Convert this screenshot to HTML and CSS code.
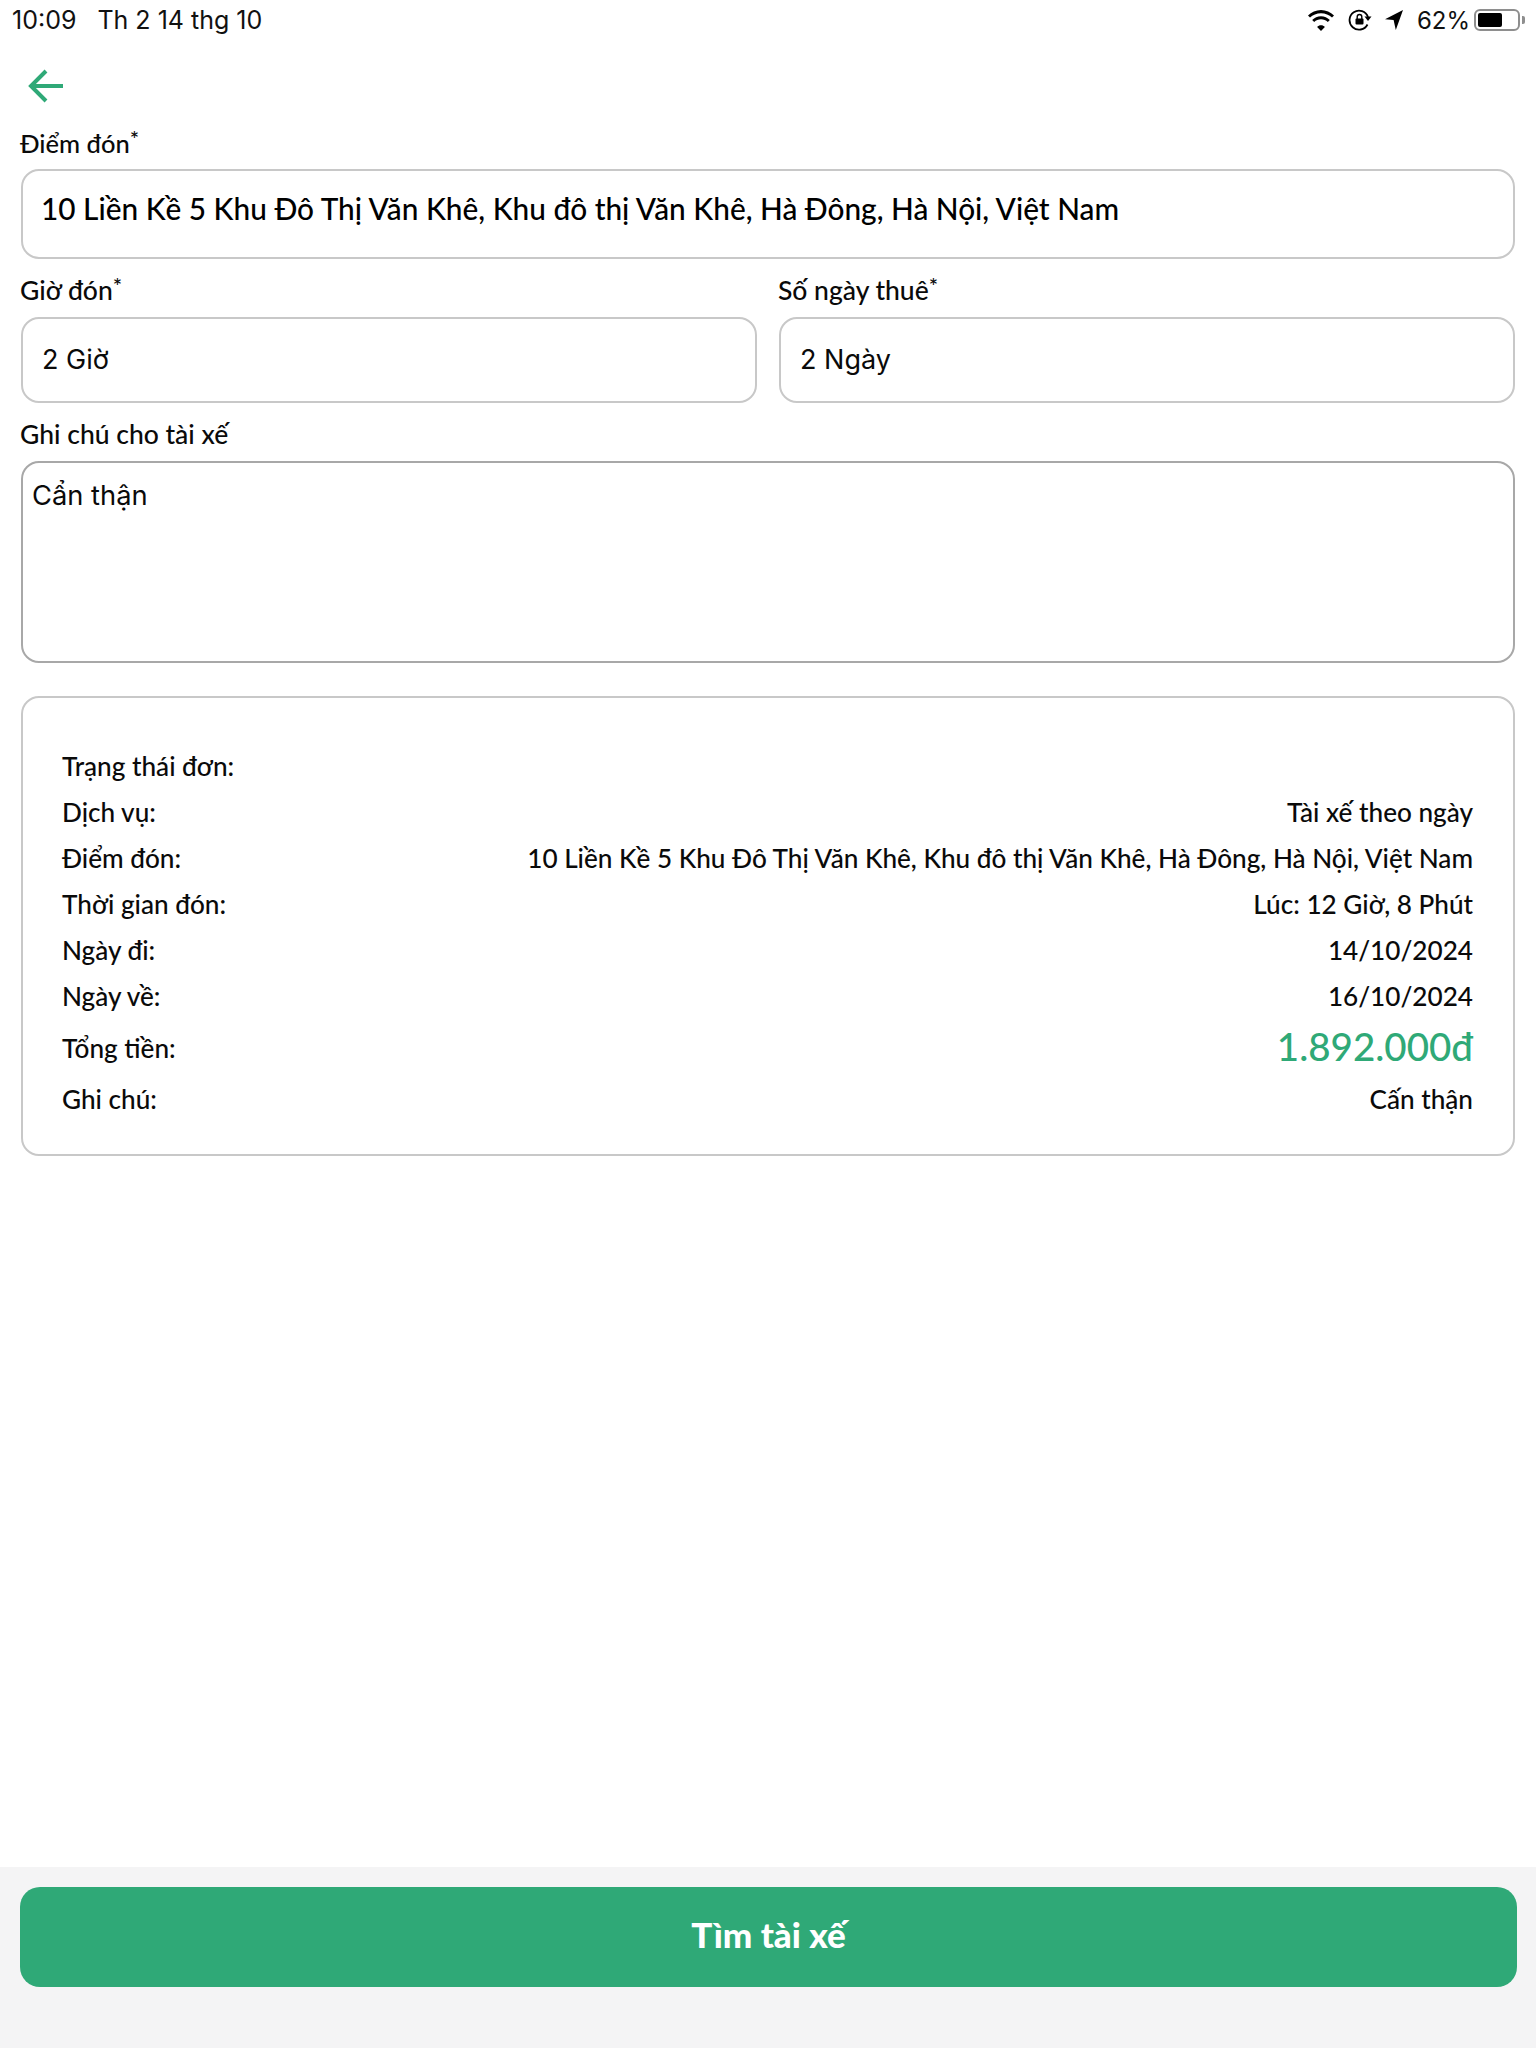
FILE: index.html
```html
<!DOCTYPE html>
<html lang="vi">
<head>
<meta charset="utf-8">
<title>Tìm tài xế</title>
<link rel="stylesheet" href="styles.css">
</head>
<body>
<div class="page">
  <header class="status">
    <div class="status-left"><span>10:09</span><span>Th 2 14 thg 10</span></div>
    <div class="status-right">
      <svg class="i-wifi" width="28" height="21" viewBox="0 0 28 21"><path d="M14 3.2c4.300 0 8.200 1.700 11 4.400l2-2.100C23.600 2.100 19 0 14 0S4.400 2.100 1 5.500l2 2.100C5.800 4.900 9.700 3.200 14 3.200zM14 9.300c2.600 0 5 1 6.800 2.700l2-2.100C20.500 7.600 17.400 6.200 14 6.200S7.500 7.600 5.200 9.900l2 2.100C9 10.300 11.400 9.300 14 9.300zM14 15.300c-1.500 0-2.900.6-3.900 1.600L14 21l3.900-4.100c-1-1-2.400-1.600-3.900-1.600z" fill="#000"/></svg>
      <svg class="i-lock" width="24" height="22" viewBox="0 0 24 22"><path d="M19.500 15.500A9.500 9.500 0 1 1 20 8" fill="none" stroke="#000" stroke-width="1.800"/><path d="M23.500 7.500h-7l3.500 4.500z" fill="#000"/><rect x="7.500" y="9.500" width="8" height="6" rx="1" fill="#000"/><path d="M9.200 10V7.800a2.300 2.300 0 0 1 4.600 0V10" fill="none" stroke="#000" stroke-width="1.400"/></svg>
      <svg class="i-loc" width="18" height="20" viewBox="0 0 18 20"><path d="M18 0L0 9.300l8.600.6L10.800 20z" fill="#000"/></svg>
      <span class="pct">62%</span>
      <div class="battery"><div class="battery-body"><div class="battery-fill"></div></div><div class="battery-nub"></div></div>
    </div>
  </header>

  <div class="back">
    <svg width="36" height="36" viewBox="0 0 36 36"><path d="M35 18H4M18 3L3 18l15 15" fill="none" stroke="#2fa977" stroke-width="4"/></svg>
  </div>

  <main class="form">
    <div class="label first">Điểm đón<sup>*</sup></div>
    <div class="input address">10 Liền Kề 5 Khu Đô Thị Văn Khê, Khu đô thị Văn Khê, Hà Đông, Hà Nội, Việt Nam</div>

    <div class="two">
      <div>
        <div class="label">Giờ đón<sup>*</sup></div>
        <div class="input small">2 Giờ</div>
      </div>
      <div>
        <div class="label">Số ngày thuê<sup>*</sup></div>
        <div class="input small">2 Ngày</div>
      </div>
    </div>

    <div class="label note-label">Ghi chú cho tài xế</div>
    <div class="textarea">Cẩn thận</div>

    <section class="card">
      <div class="row"><span>Trạng thái đơn:</span><span></span></div>
      <div class="row"><span>Dịch vụ:</span><span>Tài xế theo ngày</span></div>
      <div class="row"><span>Điểm đón:</span><span>10 Liền Kề 5 Khu Đô Thị Văn Khê, Khu đô thị Văn Khê, Hà Đông, Hà Nội, Việt Nam</span></div>
      <div class="row"><span>Thời gian đón:</span><span>Lúc: 12 Giờ, 8 Phút</span></div>
      <div class="row"><span>Ngày đi:</span><span>14/10/2024</span></div>
      <div class="row"><span>Ngày về:</span><span>16/10/2024</span></div>
      <div class="row total"><span>Tổng tiền:</span><span class="amount">1.892.000đ</span></div>
      <div class="row"><span>Ghi chú:</span><span>Cấn thận</span></div>
    </section>
  </main>

  <footer class="footer">
    <button class="cta">Tìm tài xế</button>
  </footer>
</div>
</body>
</html>
```
FILE: styles.css
```css
* { box-sizing: border-box; }
html, body { margin: 0; padding: 0; background: #fff; }
body { font-family: "Lato", "Noto Sans", sans-serif; color: #0a0a0a; }
.page { width: 1536px; height: 2048px; display: flex; flex-direction: column; }

.status { height: 40px; padding: 0 11px 0 12px; display: flex; justify-content: space-between; align-items: center; font-family: "Inter", sans-serif; font-size: 24px; color: #111; }
.status-left { display: flex; gap: 21px; font-size: 25px; }
.status-right { display: flex; align-items: center; }
.i-wifi { margin-right: 13px; }
.i-lock { margin-right: 13px; }
.i-loc { margin-right: 14px; }
.pct { margin-right: 4px; }
.battery { display: flex; align-items: center; }
.battery-body { width: 46px; height: 22px; border: 2px solid #8e8e8e; border-radius: 6px; padding: 2px 16px 2px 2px; }
.battery-fill { height: 100%; background: #000; border-radius: 2px; }
.battery-nub { width: 3px; height: 8px; margin-left: 2px; background: #8e8e8e; border-radius: 0 2px 2px 0; }

.back { height: 87px; padding: 28px 0 0 28px; }
.back svg { display: block; }

.form { padding: 0 21px; }
.label { font-size: 26.500px; font-weight: 500; line-height: 32px; margin-left: -1px; height: 32px; }
.label sup { font-size: 22px; line-height: 0; vertical-align: 6px; }
.first { height: 42px; font-size: 25.500px; }
.input { border: 2px solid #c8c8c8; border-radius: 18px; display: flex; align-items: center; }
.address { height: 90px; padding: 0 0 12px 18px; font-size: 29.800px; font-weight: 500; color: #000; }
.two { margin-top: 15px; display: grid; grid-template-columns: 736px 736px; gap: 22px; }
.two .label { height: 43px; }
.small { height: 86px; padding: 0 0 2px 19px; font-family: "Inter", sans-serif; font-size: 27px; }
.note-label { margin-top: 15px; height: 43px; line-height: 32px; }
.textarea { height: 202px; border: 2px solid #a8a8a8; border-radius: 18px; padding: 16px 9px; font-family: "Inter", sans-serif; font-size: 27.300px; line-height: 34px; }

.card { margin-top: 33px; height: 460px; border: 2px solid #c8c8c8; border-radius: 18px; padding: 45px 40px 0 39px; font-size: 26.150px; font-weight: 500; }
.row { height: 46px; display: flex; justify-content: space-between; align-items: center; }
.total { height: 57px; }
.amount { color: #2fa977; font-size: 38.500px; padding-bottom: 4px; }

.footer { margin-top: auto; height: 181px; padding: 20px 19px 0 20px; background: #f4f4f5; }
.cta { display: block; width: 100%; height: 100px; border: 0; border-radius: 20px; padding: 0 0 6px; background: #2fa977; color: #fff; font-family: "Lato", sans-serif; font-weight: 900; font-size: 35px; }
```
